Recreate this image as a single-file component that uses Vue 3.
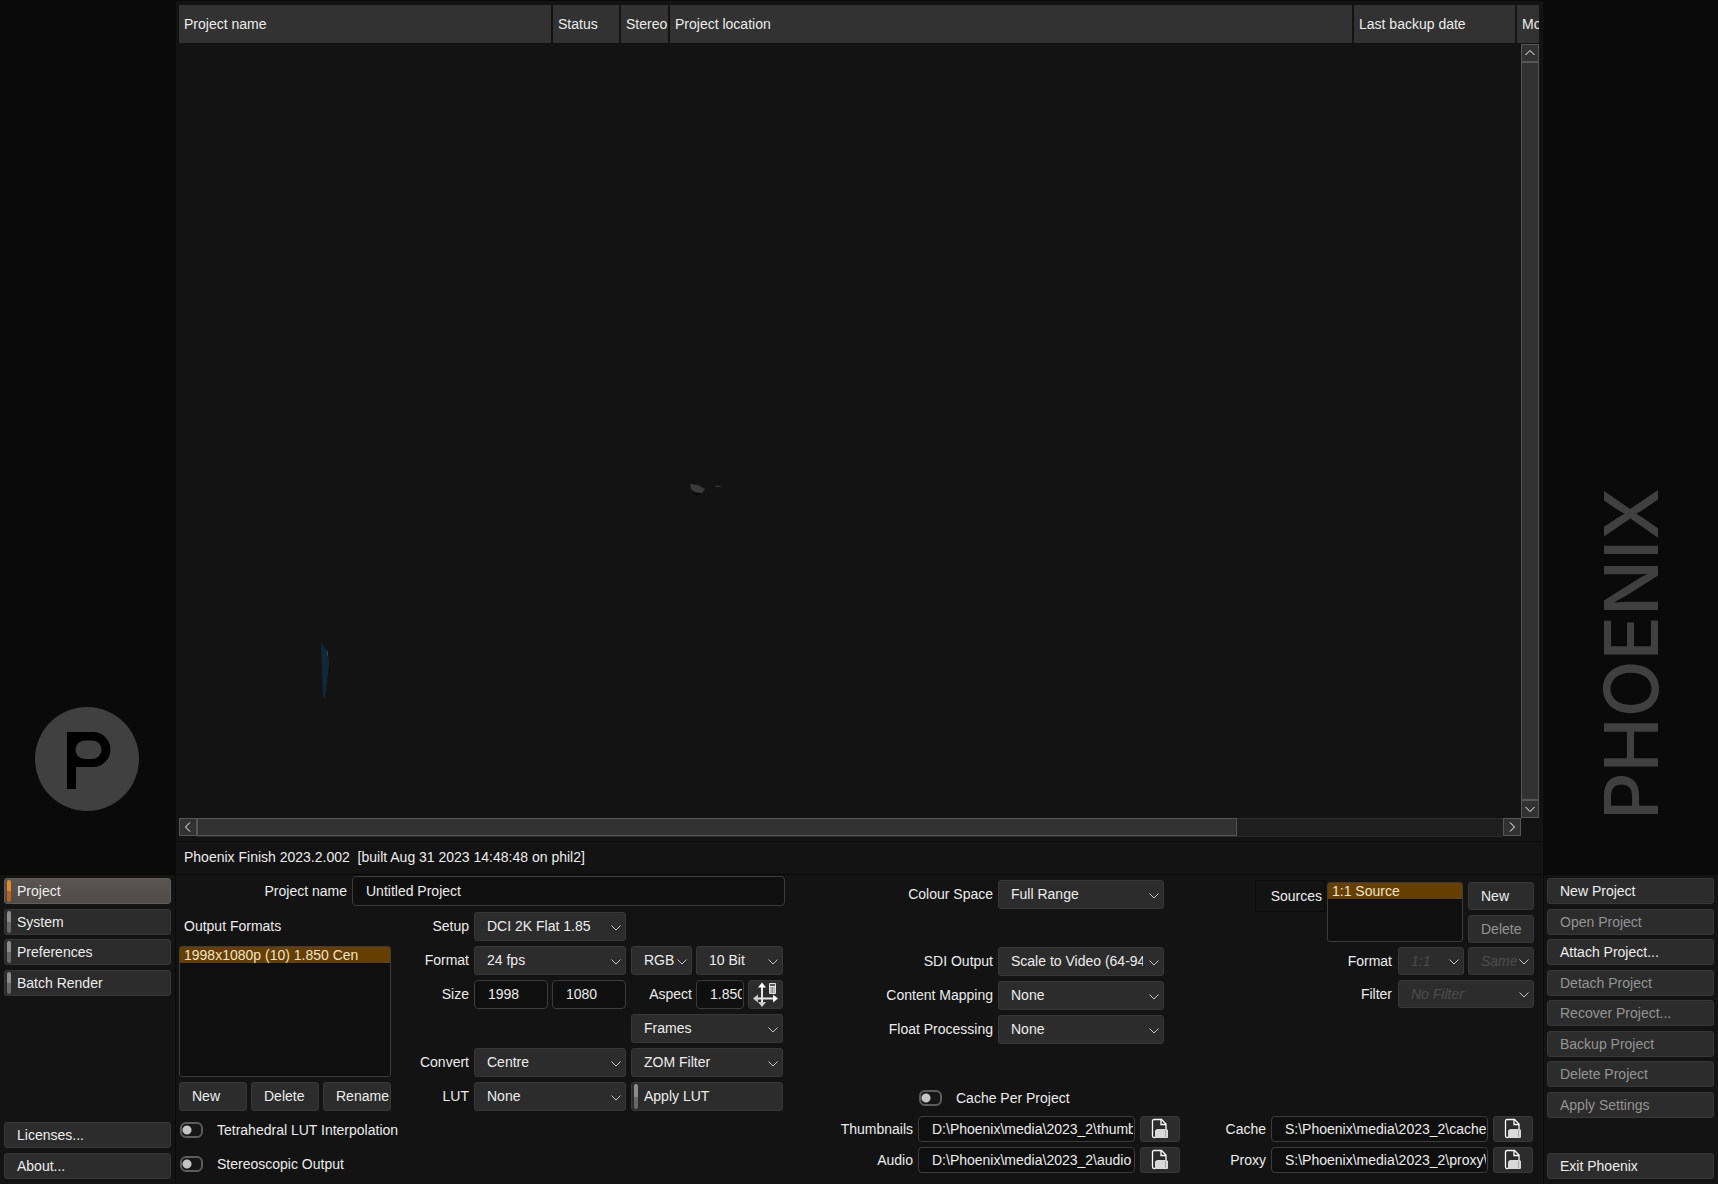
<script setup>
import { ref } from 'vue'

const tabs = ['Project', 'System', 'Preferences', 'Batch Render']
const activeTab = ref('Project')

const actions = [
  { label: 'New Project', enabled: true },
  { label: 'Open Project', enabled: false },
  { label: 'Attach Project...', enabled: true },
  { label: 'Detach Project', enabled: false },
  { label: 'Recover Project...', enabled: false },
  { label: 'Backup Project', enabled: false },
  { label: 'Delete Project', enabled: false },
  { label: 'Apply Settings', enabled: false },
]

const processing = [
  { id: 'sdi-output', label: 'SDI Output', value: 'Scale to Video (64-940)' },
  { id: 'content-mapping', label: 'Content Mapping', value: 'None' },
  { id: 'float-processing', label: 'Float Processing', value: 'None' },
]

const mediaPaths = [
  { id: 'thumbnails', label: 'Thumbnails', value: 'D:\\Phoenix\\media\\2023_2\\thumbs' },
  { id: 'audio', label: 'Audio', value: 'D:\\Phoenix\\media\\2023_2\\audio' },
]
const cachePaths = [
  { id: 'cache', label: 'Cache', value: 'S:\\Phoenix\\media\\2023_2\\cache' },
  { id: 'proxy', label: 'Proxy', value: 'S:\\Phoenix\\media\\2023_2\\proxy\\' },
]
const pathGroups = [mediaPaths, cachePaths]

const projectName = ref('Untitled Project')
</script>

<template>
  <div class="shell">
    <div class="brand brand-left">
      <svg class="emblem" viewBox="0 0 104 104" aria-label="Phoenix emblem">
        <circle cx="52" cy="52" r="52" fill="#404040" />
        <path d="M32 25h26a17.500 17.500 0 0 1 0 35H41v22h-9z" fill="#000" />
        <rect x="40.500" y="33.500" width="26" height="18.500" rx="9" fill="#404040" />
      </svg>
    </div>

    <main class="browser">
      <table class="columns">
        <colgroup>
          <col class="c-name" /><col class="c-status" /><col class="c-stereo" /><col /><col class="c-date" /><col class="c-more" />
        </colgroup>
        <thead>
          <tr>
            <th>Project name</th><th>Status</th><th>Stereo</th><th>Project location</th><th>Last backup date</th><th>Mo</th>
          </tr>
        </thead>
      </table>
      <div class="list-area">
        <div class="canvas">
          <svg class="backdrop" width="600" height="700" viewBox="0 0 600 700" aria-hidden="true">
            <path d="M142 598l7 10 1 12-4 36-2-4z" fill="#10293a" />
            <path d="M148 607h1v5h-1z" fill="#3d3d3d" />
            <path d="M511 440l8 1 7 4-3 4h-6l-5-4z" fill="#3b3b3b" />
            <path d="M513 448l9 1-4 3z" fill="#090909" />
            <path d="M535 443l4-2 4 2z" fill="#363636" />
          </svg>
        </div>
        <div class="vbar">
          <button class="sb" aria-label="Scroll up"><svg viewBox="0 0 16 16"><path d="M3.500 10 8 5.500 12.500 10" /></svg></button>
          <div class="vthumb"></div>
          <button class="sb" aria-label="Scroll down"><svg viewBox="0 0 16 16"><path d="M3.500 6 8 10.500 12.500 6" /></svg></button>
        </div>
      </div>
      <div class="hbar">
        <button class="sb" aria-label="Scroll left"><svg viewBox="0 0 16 16"><path d="M10 3.500 5.500 8l4.500 4.500" /></svg></button>
        <div class="htrack"><div class="hthumb"></div></div>
        <button class="sb" aria-label="Scroll right"><svg viewBox="0 0 16 16"><path d="M6 3.500 10.500 8 6 12.500" /></svg></button>
      </div>
      <div class="status">Phoenix Finish 2023.2.002&nbsp; [built Aug 31 2023 14:48:48 on phil2]</div>
    </main>

    <div class="brand brand-right"><div class="wordmark">PHOENIX</div></div>

    <nav class="menu menu-left">
      <button
        v-for="tab in tabs"
        :key="tab"
        class="btn marked"
        :class="{ active: tab === activeTab }"
        @click="activeTab = tab"
      >{{ tab }}</button>
      <button class="btn slot-9">Licenses...</button>
      <button class="btn slot-10">About...</button>
    </nav>

    <form class="settings" @submit.prevent>
      <section class="output">
        <div class="name-row">
          <label for="project-name">Project name</label>
          <input id="project-name" v-model="projectName" class="field" type="text" />
        </div>

        <div class="output-body">
          <div class="formats">
            <span class="formats-title">Output Formats</span>
            <ul class="listbox" role="listbox" aria-label="Output Formats">
              <li role="option" aria-selected="true">1998x1080p (10) 1.850 Cen</li>
            </ul>
            <div class="pair">
              <button class="btn grow" type="button">New</button>
              <button class="btn grow" type="button">Delete</button>
              <button class="btn grow" type="button">Rename</button>
            </div>
          </div>

          <div class="output-grid">
            <label for="setup">Setup</label>
            <span class="pick"><select id="setup"><option>DCI 2K Flat 1.85</option></select><svg viewBox="0 0 10 6"><path d="M.5.5 5 5 9.500.5" /></svg></span>

            <label for="rate">Format</label>
            <span class="pick"><select id="rate"><option>24 fps</option></select><svg viewBox="0 0 10 6"><path d="M.5.5 5 5 9.500.5" /></svg></span>
            <div class="pair">
              <span class="pick w-rgb"><select aria-label="Colour model"><option>RGB</option></select><svg viewBox="0 0 10 6"><path d="M.5.5 5 5 9.500.5" /></svg></span>
              <span class="pick grow"><select aria-label="Bit depth"><option>10 Bit</option></select><svg viewBox="0 0 10 6"><path d="M.5.5 5 5 9.500.5" /></svg></span>
            </div>

            <label for="size-w">Size</label>
            <div class="pair">
              <input id="size-w" class="field grow" type="text" value="1998" />
              <input class="field grow" type="text" value="1080" aria-label="Height" />
            </div>
            <div class="pair">
              <label class="w-rgb" for="aspect">Aspect</label>
              <input id="aspect" class="field grow" type="text" value="1.850" />
              <button class="btn icon-btn" type="button" aria-label="Calculate aspect">
                <svg width="33" height="27" viewBox="0 0 33 27">
                  <path d="M13 5v17M8 17.500h17" stroke="#e8e8e8" stroke-width="2" />
                  <path d="M13 1.500l4 5H9zM29 17.500l-5-4v8z" fill="#fff" />
                  <path d="M13 26l-4-5h8zM4 17.500l5-4v8z" fill="#ccc" />
                  <rect x="20" y="2" width="7" height="11" rx="1" fill="#e4e4e4" />
                  <path d="M21 4h5" stroke="#2b2b2b" stroke-width="1.500" />
                  <path d="M21.500 7h4M21.500 9h4M21.500 11h4" stroke="#2b2b2b" stroke-dasharray="1 .6" />
                </svg>
              </button>
            </div>

            <span class="pick frames"><select aria-label="Field mode"><option>Frames</option></select><svg viewBox="0 0 10 6"><path d="M.5.5 5 5 9.500.5" /></svg></span>

            <label for="convert">Convert</label>
            <span class="pick"><select id="convert"><option>Centre</option></select><svg viewBox="0 0 10 6"><path d="M.5.5 5 5 9.500.5" /></svg></span>
            <span class="pick"><select aria-label="Conversion filter"><option>ZOM Filter</option></select><svg viewBox="0 0 10 6"><path d="M.5.5 5 5 9.500.5" /></svg></span>

            <label for="lut">LUT</label>
            <span class="pick"><select id="lut"><option>None</option></select><svg viewBox="0 0 10 6"><path d="M.5.5 5 5 9.500.5" /></svg></span>
            <button class="btn marked" type="button">Apply LUT</button>
          </div>
        </div>

        <div class="switches">
          <label class="toggle"><input type="checkbox" />Tetrahedral LUT Interpolation</label>
          <label class="toggle"><input type="checkbox" />Stereoscopic Output</label>
        </div>
      </section>

      <section class="side">
        <div class="side-top">
          <div class="processing-col">
            <div class="processing">
              <label for="colour-space">Colour Space</label>
              <span class="pick"><select id="colour-space"><option>Full Range</option></select><svg viewBox="0 0 10 6"><path d="M.5.5 5 5 9.500.5" /></svg></span>
            </div>
            <div class="processing">
              <template v-for="item in processing" :key="item.id">
                <label :for="item.id">{{ item.label }}</label>
                <span class="pick"><select :id="item.id"><option>{{ item.value }}</option></select><svg viewBox="0 0 10 6"><path d="M.5.5 5 5 9.500.5" /></svg></span>
              </template>
            </div>
          </div>
          <div class="sources">
            <div class="source-row">
              <span class="source-title">Sources</span>
              <ul class="listbox source-list" role="listbox" aria-label="Sources">
                <li role="option" aria-selected="true">1:1 Source</li>
              </ul>
              <div class="source-buttons">
                <button class="btn" type="button">New</button>
                <button class="btn" type="button" disabled>Delete</button>
              </div>
            </div>
            <div class="source-grid">
              <label for="source-format">Format</label>
              <span class="pick"><select id="source-format" disabled><option>1:1</option></select><svg viewBox="0 0 10 6"><path d="M.5.5 5 5 9.500.5" /></svg></span>
              <span class="pick"><select aria-label="Source size" disabled><option>Same</option></select><svg viewBox="0 0 10 6"><path d="M.5.5 5 5 9.500.5" /></svg></span>
              <label for="source-filter">Filter</label>
              <span class="pick span2"><select id="source-filter" disabled><option>No Filter</option></select><svg viewBox="0 0 10 6"><path d="M.5.5 5 5 9.500.5" /></svg></span>
            </div>
          </div>
        </div>

        <div class="side-bottom">
          <div v-for="(group, g) in pathGroups" :key="g" class="paths">
            <label v-if="g === 0" class="toggle cache-toggle"><input type="checkbox" />Cache Per Project</label>
            <template v-for="item in group" :key="item.id">
              <label :for="item.id">{{ item.label }}</label>
              <input :id="item.id" class="field" type="text" :value="item.value" />
              <button class="btn icon-btn" type="button" :aria-label="'Browse ' + item.label">
                <svg width="38" height="24" viewBox="0 0 38 24">
                  <path d="M14 20.500h-1a1.500 1.500 0 0 1-1.500-1.500V4A1.500 1.500 0 0 1 13 2.500h7.500L25 7v5" fill="none" stroke="#fff" stroke-width="1.300" />
                  <path d="M20 2.500V7.500h5" fill="none" stroke="#fff" stroke-width="1.300" />
                  <path d="M14 21v-7.500l2-1.500h9.500l1.500 1v7q0 1-1 1z" fill="#d8d8d8" />
                  <path d="M24.500 13v7" stroke="#999" stroke-width=".8" />
                </svg>
              </button>
            </template>
          </div>
        </div>
      </section>
    </form>

    <nav class="menu menu-right">
      <button v-for="action in actions" :key="action.label" class="btn" :disabled="!action.enabled">{{ action.label }}</button>
      <button class="btn slot-10">Exit Phoenix</button>
    </nav>
  </div>
</template>

<style>
body {
  margin: 0;
  background: #0a0a0a;
}
</style>

<style scoped>
.shell {
  display: grid;
  grid-template-columns: 176px minmax(0, 1fr) 175px;
  grid-template-rows: 1fr auto;
  min-height: 100vh;
  background: #0a0a0a;
  color: #ececec;
  font: 14px/16px "Liberation Sans", Arial, sans-serif;
}
.shell * {
  box-sizing: border-box;
}
button,
input,
select {
  margin: 0;
  font: inherit;
  color: inherit;
}

/* brand columns */
.brand {
  display: flex;
  flex-direction: column;
  justify-content: flex-end;
}
.brand-left {
  padding: 0 0 63px 35px;
}
.brand-right {
  align-items: center;
  padding-bottom: 54px;
}
.emblem {
  width: 104px;
  height: 104px;
}
.wordmark {
  writing-mode: vertical-rl;
  transform: rotate(180deg);
  font: 500 74px/84px Inter, "DejaVu Sans", sans-serif;
  color: #404040;
}

/* project browser */
.browser {
  display: flex;
  flex-direction: column;
  padding: 4px 4px 0 3px;
  background: #131313;
  border-top: 1px solid #090909;
}
.columns {
  width: 100%;
  table-layout: fixed;
  border-collapse: separate;
  border-spacing: 0;
}
.c-name { width: 374px; }
.c-status { width: 68px; }
.c-stereo { width: 49px; }
.c-date { width: 163px; }
.c-more { width: 22px; }
.columns th {
  height: 38px;
  padding: 0 0 0 5px;
  overflow: hidden;
  white-space: nowrap;
  text-align: left;
  font-weight: normal;
  background: #323232;
  border-right: 2px solid #131313;
}
.columns th:last-child {
  border-right: 0;
}
.list-area {
  flex: 1;
  display: flex;
  min-height: 400px;
  margin-top: 1px;
}
.canvas {
  flex: 1;
  position: relative;
  overflow: hidden;
}
.backdrop {
  position: absolute;
  left: 0;
  top: 0;
}
.vbar {
  display: flex;
  flex-direction: column;
  width: 18px;
}
.sb {
  flex: none;
  width: 18px;
  height: 18px;
  padding: 0;
  background: #323232;
  border: 1px solid #565656;
}
.sb svg {
  display: block;
  width: 16px;
  height: 16px;
  fill: none;
  stroke: #fff;
}
.vthumb {
  flex: 1;
  background: #323232;
  border: 1px solid #565656;
}
.hbar {
  display: flex;
  margin-right: 18px;
}
.htrack {
  flex: 1;
  background: #1f1f1f;
  border: solid #2b2b2b;
  border-width: 1px 0;
}
.hthumb {
  width: 79.6%;
  height: 18px;
  margin-top: -1px;
  background: #323232;
  border: 1px solid #565656;
}
.status {
  height: 33px;
  margin: 4px -4px 0 -3px;
  padding: 7px 8px;
  border-top: 1px solid #0a0a0a;
}

/* shared controls */
.btn {
  position: relative;
  min-width: 0;
  padding: 0 0 0 12px;
  overflow: hidden;
  text-align: left;
  white-space: nowrap;
  background: #2c2c2c;
  border: 1px solid #383838;
  border-radius: 3px;
}
.btn:disabled {
  color: #949494;
}
.marked::before {
  content: "";
  position: absolute;
  left: 2px;
  top: 1px;
  bottom: 1px;
  width: 4px;
  border-radius: 2px;
  background: linear-gradient(#8c8c8c 50%, #686868 50%);
}
.active {
  background: linear-gradient(#5a5452, #504b49);
  border-color: #625d5b;
}
.active::before {
  background: linear-gradient(#e18a26 50%, #bb6118 50%);
}
.shell .icon-btn {
  padding: 0;
}
.icon-btn svg {
  display: block;
}
.field {
  min-width: 0;
  padding: 0 1px 0 13px;
  background: #0f0f0f;
  border: 1px solid #3c3c3c;
  border-radius: 4px;
}
.pick {
  position: relative;
  display: block;
  min-width: 0;
}
.pick select {
  display: block;
  width: 100%;
  height: 100%;
  padding: 0 16px 0 12px;
  appearance: none;
  background: #2c2c2c;
  border: 1px solid #383838;
  border-radius: 3px;
  opacity: 1;
}
.pick select:disabled {
  color: #4c4c4c;
  font-style: italic;
}
.pick svg {
  position: absolute;
  right: 5px;
  top: 50%;
  width: 10px;
  height: 6px;
  margin-top: -2px;
  fill: none;
  stroke: #c4c4c4;
  pointer-events: none;
}
.listbox {
  margin: 0;
  padding: 0;
  list-style: none;
  background: #0f0f0f;
  border: 1px solid #3c3c3c;
  border-radius: 3px;
}
.listbox li {
  height: 16px;
  padding-left: 4px;
  background: #643f00;
  color: #f2e2c6;
}
.toggle {
  display: flex;
  align-items: center;
  gap: 14px;
}
.toggle input {
  width: 23px;
  height: 16px;
  appearance: none;
  border: 2px solid #5c5c5c;
  border-radius: 6px;
  background: radial-gradient(circle at 5px 6px, #c4c4c4 4px, #161616 5px);
}
.grow {
  flex: 1;
  width: 0;
}

/* side menus */
.menu {
  display: grid;
  grid-template-rows: repeat(10, 26px);
  align-content: space-between;
  padding: 3px 4px 5px;
  background: #131313;
  border-top: 1px solid #090909;
}
.menu-left {
  border-right: 1px solid #0a0a0a;
}
.menu-right {
  border-left: 1px solid #0a0a0a;
  padding-left: 3px;
}
.slot-9 { grid-row: 9; }
.slot-10 { grid-row: 10; }

/* settings form */
.settings {
  display: grid;
  grid-template-columns: 606px minmax(0, 1fr);
  padding: 1px 9px 5px 3px;
  background: #131313;
  border-top: 1px solid #090909;
}
.settings label {
  white-space: nowrap;
}
.name-row {
  display: grid;
  grid-template-columns: 1fr 433px;
  gap: 5px;
  height: 30px;
  margin-bottom: 6px;
}
.name-row label,
.output-grid > label,
.pair label,
.processing label,
.source-grid label,
.paths > label {
  align-self: center;
  text-align: right;
}
.output-body {
  display: flex;
  gap: 5px;
}
.formats {
  display: grid;
  grid-template-columns: 212px;
  grid-template-rows: 29px 1fr 29px;
  gap: 5px;
}
.formats-title {
  align-self: center;
  padding: 0 0 1px 5px;
}
.output-grid {
  display: grid;
  grid-template-columns: 73px 152px 152px;
  grid-auto-rows: 29px;
  gap: 5px;
}
.output-grid > label {
  grid-column: 1;
}
.output-body label,
.output-body .btn,
.output-body .field,
.output-body select,
.processing label,
.processing select,
.switches .toggle {
  padding-bottom: 1px;
}
.frames {
  grid-column: 3;
}
.pair {
  display: flex;
  gap: 4px;
}
.w-rgb {
  flex: none;
  width: 61px;
}
.switches {
  display: grid;
  grid-auto-rows: 29px;
  gap: 5px;
  justify-content: start;
  margin-top: 5px;
  padding-left: 1px;
}
.side {
  display: flex;
  flex-direction: column;
  justify-content: space-between;
  padding: 4px 0 6px 41px;
}
.side-top,
.side-bottom {
  display: grid;
  grid-template-columns: 1fr 1fr;
}
.processing-col {
  display: grid;
  align-content: start;
  gap: 38px;
  padding-right: 16px;
}
.processing {
  display: grid;
  grid-template-columns: auto 166px;
  grid-auto-rows: 29px;
  justify-content: end;
  gap: 5px;
}
.processing select {
  padding-right: 20px;
}
.source-row {
  display: grid;
  grid-template-columns: 70px 135px 66px;
  column-gap: 4px;
  justify-content: end;
}
.source-title {
  height: 32px;
  padding: 7px 2px 0 0;
  text-align: right;
  border: 1px solid #0b0b0b;
}
.source-list {
  width: 136px;
  height: 60px;
  margin: 2px 0 0 -2px;
}
.source-buttons {
  display: grid;
  grid-template-rows: 28px 28px;
  gap: 5px;
  margin-top: 2px;
}
.source-grid {
  display: grid;
  grid-template-columns: auto 66px 66px;
  grid-auto-rows: 28px;
  justify-content: end;
  gap: 5px 4px;
  margin-top: 4px;
}
.source-grid label {
  padding-right: 2px;
}
.span2 { grid-column: span 2; }
.paths {
  display: grid;
  grid-template-columns: auto 217px 40px;
  grid-auto-rows: 26px;
  justify-content: end;
  align-content: end;
  gap: 5px;
}
.paths:last-child {
  padding-right: 1px;
}
.settings .cache-toggle {
  grid-column: 2 / -1;
  padding-left: 1px;
  text-align: left;
}
</style>
